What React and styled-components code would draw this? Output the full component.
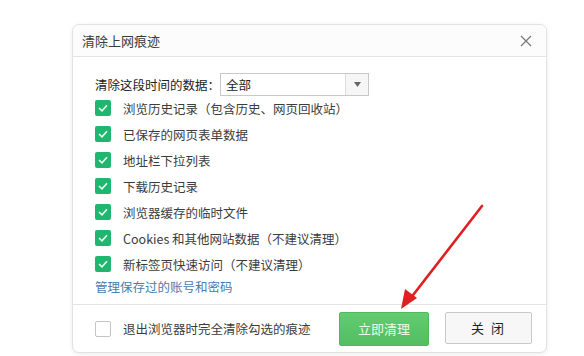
import React, { useState } from 'react';
import styled, { createGlobalStyle } from 'styled-components';

const GlobalStyle = createGlobalStyle`
  html, body {
    margin: 0;
    background: #fff;
    font-family: "Microsoft YaHei", "Noto Sans CJK SC", sans-serif;
  }
`;

const items = [
  '浏览历史记录（包含历史、网页回收站）',
  '已保存的网页表单数据',
  '地址栏下拉列表',
  '下载历史记录',
  '浏览器缓存的临时文件',
  'Cookies 和其他网站数据（不建议清理）',
  '新标签页快速访问（不建议清理）',
];

const Check = ({ checked }) => (
  <CheckBox checked={checked}>
    {checked && (
      <svg width="10" height="8" viewBox="0 0 10 8">
        <path d="M1 4 L4 6.8 L9 1.2" fill="none" stroke="#e8fff2" strokeWidth="1.6" />
      </svg>
    )}
  </CheckBox>
);

const App = () => {
  const [range] = useState('全部');

  return (
    <Page>
      <GlobalStyle />
      <Dialog>
        <Header>
          <Title>清除上网痕迹</Title>
          <CloseX>
            <svg width="12" height="12" viewBox="0 0 12 12">
              <path d="M1 1 L11 11 M11 1 L1 11" stroke="#777" strokeWidth="1.2" />
            </svg>
          </CloseX>
        </Header>
        <Body>
          <RangeRow>
            <Label>清除这段时间的数据：</Label>
            <Select>
              <SelectValue>{range}</SelectValue>
              <SelectArrow>
                <svg width="7" height="5" viewBox="0 0 7 5">
                  <path d="M0 0 H7 L3.5 5 Z" fill="#666" />
                </svg>
              </SelectArrow>
            </Select>
          </RangeRow>
          <List>
            {items.map((text, i) => (
              <Item key={i}>
                <Check checked />
                <span>{text}</span>
              </Item>
            ))}
          </List>
          <Link>管理保存过的账号和密码</Link>
        </Body>
        <Footer>
          <Item>
            <Check checked={false} />
            <span>退出浏览器时完全清除勾选的痕迹</span>
          </Item>
          <Buttons>
            <Button primary>立即清理</Button>
            <Button>关 闭</Button>
          </Buttons>
        </Footer>
      </Dialog>
      <Arrow width="90" height="110" viewBox="0 0 90 110">
        <path d="M85 3 L13 96" stroke="#e02020" strokeWidth="2.6" strokeLinecap="round" />
        <path d="M4 106 L8 86 L20 95 Z" fill="#e02020" />
      </Arrow>
    </Page>
  );
};

const Page = styled.div`
  position: relative;
  width: 584px;
  height: 356px;
  padding: 24px 0 0 72px;
  box-sizing: border-box;
`;

const Dialog = styled.div`
  width: 475px;
  height: 329px;
  box-sizing: border-box;
  border: 1px solid #e2e2e2;
  border-radius: 7px;
  background: #fff;
  box-shadow: 0 1px 4px rgba(0, 0, 0, 0.08);
  display: flex;
  flex-direction: column;
  overflow: hidden;
`;

const Header = styled.div`
  height: 31px;
  display: flex;
  align-items: center;
  justify-content: space-between;
  padding: 0 14px 0 9px;
  border-bottom: 1px solid #e4e4e4;
  background: #fcfcfc;
`;

const Title = styled.div`
  font-size: 13px;
  color: #3a3a3a;
`;

const CloseX = styled.div`
  display: flex;
  align-items: center;
`;

const Body = styled.div`
  flex: 1;
  padding: 16px 0 0 22px;
  display: flex;
  flex-direction: column;
`;

const RangeRow = styled.div`
  display: flex;
  align-items: center;
  height: 23px;
`;

const Label = styled.span`
  font-size: 12.5px;
  color: #222;
  width: 125px;
`;

const Select = styled.div`
  width: 149px;
  height: 23px;
  box-sizing: border-box;
  border: 1px solid #c8c8c8;
  display: flex;
`;

const SelectValue = styled.div`
  flex: 1;
  font-size: 12.5px;
  color: #222;
  padding-left: 5px;
  line-height: 21px;
`;

const SelectArrow = styled.div`
  width: 22px;
  border-left: 1px solid #ddd;
  background: #f6f6f6;
  display: flex;
  align-items: center;
  justify-content: center;
`;

const List = styled.div`
  display: flex;
  flex-direction: column;
  gap: 10px;
  margin-top: 4px;
`;

const Item = styled.div`
  display: flex;
  align-items: center;
  height: 16px;
  font-size: 12.5px;
  color: #3c3c3c;
  gap: 12px;
`;

const CheckBox = styled.div`
  width: 16px;
  height: 16px;
  box-sizing: border-box;
  border-radius: 2px;
  background: ${p => (p.checked ? '#1fb66f' : '#fff')};
  border: ${p => (p.checked ? 'none' : '1px solid #c4c4c4')};
  display: flex;
  align-items: center;
  justify-content: center;
  flex-shrink: 0;
`;

const Link = styled.div`
  font-size: 12.5px;
  color: #4a7bb0;
  margin-top: 5px;
`;

const Footer = styled.div`
  height: 47px;
  border-top: 1px solid #e4e4e4;
  display: flex;
  align-items: center;
  justify-content: space-between;
  padding: 0 14px 0 22px;
`;

const Buttons = styled.div`
  display: flex;
  gap: 16px;
`;

const Button = styled.div`
  width: ${p => (p.primary ? '90px' : '87px')};
  height: ${p => (p.primary ? '34px' : '32px')};
  box-sizing: border-box;
  border-radius: 2px;
  display: flex;
  align-items: center;
  justify-content: center;
  font-size: 13px;
  letter-spacing: ${p => (p.primary ? '0' : '2px')};
  color: ${p => (p.primary ? '#eafbe9' : '#222')};
  background: ${p => (p.primary ? 'linear-gradient(#63cc70, #52bd61)' : '#f7f7f7')};
  border: 1px solid ${p => (p.primary ? '#4fb85d' : '#c9c9c9')};
`;

const Arrow = styled.svg`
  position: absolute;
  left: 397px;
  top: 203px;
`;

export default App;
